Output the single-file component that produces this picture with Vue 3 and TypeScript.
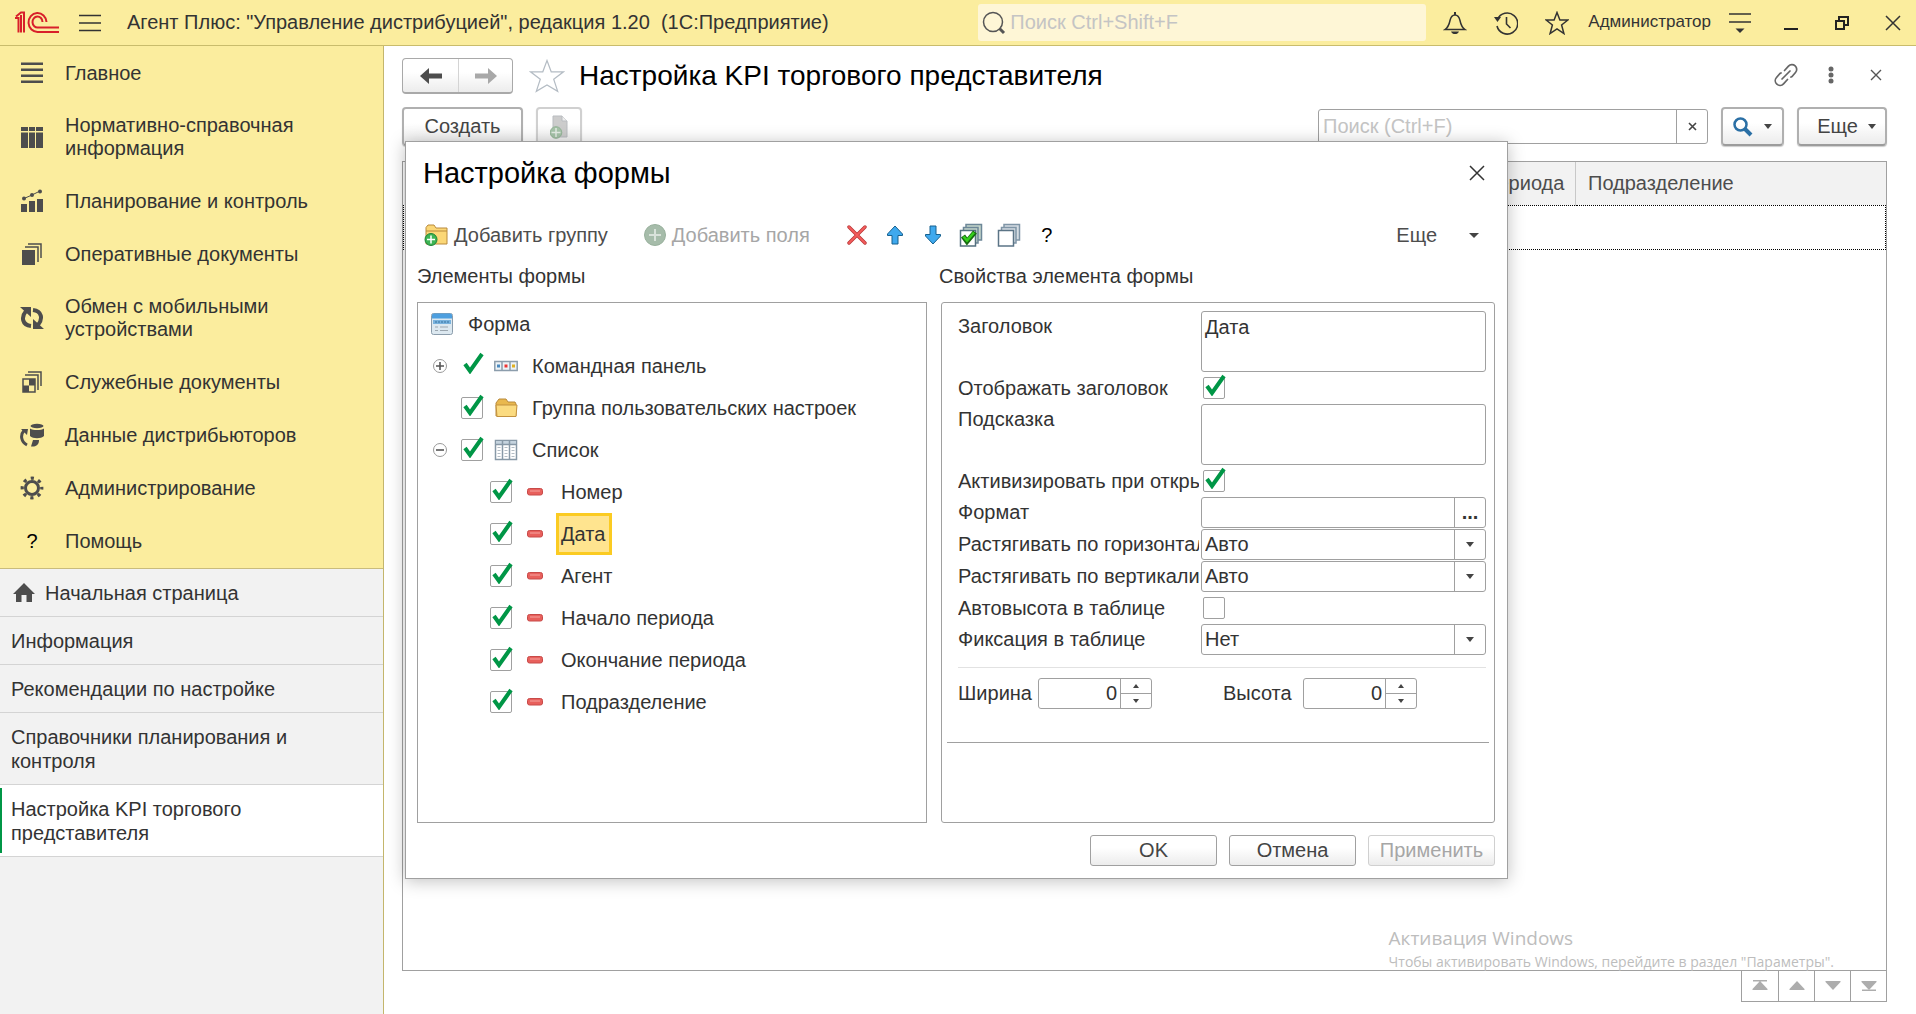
<script setup lang="ts">
import { ref } from 'vue'

interface Section { icon: string; title: string }
interface TreeField { title: string; visible: boolean }

const sections: Section[] = [
  { icon: 'main', title: 'Главное' },
  { icon: 'table', title: 'Нормативно-справочная информация' },
  { icon: 'chart', title: 'Планирование и контроль' },
  { icon: 'docs', title: 'Оперативные документы' },
  { icon: 'sync', title: 'Обмен с мобильными устройствами' },
  { icon: 'service', title: 'Служебные документы' },
  { icon: 'data', title: 'Данные дистрибьюторов' },
  { icon: 'gear', title: 'Администрирование' },
  { icon: 'help', title: 'Помощь' },
]

const openPages: string[] = [
  'Информация',
  'Рекомендации по настройке',
  'Справочники планирования и контроля',
  'Настройка KPI торгового представителя',
]
const currentPage = openPages[3]

const fields = ref<TreeField[]>(
  ['Номер', 'Дата', 'Агент', 'Начало периода', 'Окончание периода', 'Подразделение'].map((title) => ({ title, visible: true })),
)
const selected = ref('Дата')

const groupVisible = ref(true)
const listVisible = ref(true)

const caption = ref('Дата')
const showCaption = ref(true)
const hint = ref('')
const activate = ref(true)
const format = ref('')
const stretchX = ref('Авто')
const stretchY = ref('Авто')
const autoHeight = ref(false)
const fixation = ref('Нет')
const width = ref(0)
const height = ref(0)
</script>

<template>
  <div class="app">
    <header class="topbar">
      <svg class="logo" width="44" height="24" viewBox="0 0 44 24" fill="none" stroke="#d8202a" stroke-width="2">
        <path d="M0 7h3.500V21.500M1 5.500 6 1.500h3V21.500M6 4v17.500" />
        <path d="M31.500 11A9 9.500 0 1 0 23 21H44M27.500 11A5 5.500 0 1 0 23 16.500H44" />
      </svg>
      <button class="icon-btn menu-btn" aria-label="Меню">
        <svg width="22" height="18" viewBox="0 0 22 18" stroke="#333" stroke-width="1.500"><path d="M0 1.500h22M0 9h22M0 16.500h22" /></svg>
      </button>
      <div class="app-title">Агент Плюс: "Управление дистрибуцией", редакция 1.20&nbsp; (1С:Предприятие)</div>
      <label class="global-search">
        <svg width="24" height="24" viewBox="0 0 24 24" fill="none" stroke="#555"><circle cx="11" cy="11" r="9.500" stroke-width="1.500" /><path d="m17.500 17.500 4.500 4.500" stroke-width="3" /></svg>
        <input type="text" placeholder="Поиск Ctrl+Shift+F" aria-label="Поиск" />
      </label>
      <button class="icon-btn bell" aria-label="Уведомления">
        <svg width="24" height="24" viewBox="0 0 24 24" fill="none" stroke="#333" stroke-width="1.500"><path d="M2 18.500c3-2 4-4 5-9C8 5 9.500 4 12 4s4 1 5 5.500c1 5 2 7 5 9z" /><path d="M12 1v3" stroke-width="2" /><path d="M8 20.500h8c-1 2-2 2.500-4 2.500s-3-.5-4-2.500z" fill="#333" stroke="none" /></svg>
      </button>
      <button class="icon-btn history" aria-label="История">
        <svg width="24" height="24" viewBox="0 0 24 24" fill="none" stroke="#333" stroke-width="1.600"><path d="M3.500 8.500A10.500 10.500 0 1 1 3 15" /><path d="M12.500 6v7l4 4" /><path d="M0 6h7l-3.500 5z" fill="#333" stroke="none" /></svg>
      </button>
      <button class="icon-btn fav" aria-label="Избранное">
        <svg width="24" height="24" viewBox="0 0 24 24" fill="none" stroke="#333" stroke-width="1.500"><path d="m12 1.500 2.900 7.500h8l-6.300 5 2.300 8.500-6.900-4.700-6.900 4.700 2.300-8.500L1.100 9h8z" /></svg>
      </button>
      <a class="user" href="#">Администратор</a>
      <button class="icon-btn" aria-label="Сервис">
        <svg width="22" height="22" viewBox="0 0 22 22" stroke="#333" stroke-width="1.500"><path d="M0 2h22M0 10h22" /><path d="M6.500 16.500h9l-4.500 4.500z" fill="#333" stroke="none" /></svg>
      </button>
      <button class="icon-btn minimize" aria-label="Свернуть">
        <svg width="16" height="16" viewBox="0 0 16 16"><path d="M1 13h14v2H1z" fill="#222" /></svg>
      </button>
      <button class="icon-btn restore" aria-label="Восстановить">
        <svg width="16" height="16" viewBox="0 0 16 16" fill="none" stroke="#222" stroke-width="2"><path d="M2 6h8v8H2zM5 5V2h9v8h-3" /></svg>
      </button>
      <button class="icon-btn close-app" aria-label="Закрыть">
        <svg width="16" height="16" viewBox="0 0 16 16" stroke="#333" stroke-width="1.500"><path d="m1 1 14 14M15 1 1 15" /></svg>
      </button>
    </header>

    <div class="body">
      <aside class="sidebar">
        <nav class="sections">
          <a v-for="s in sections" :key="s.icon" href="#" class="section">
            <span v-if="s.icon === 'help'" class="section-icon help">?</span>
            <svg v-else class="section-icon" width="24" height="24" viewBox="0 0 24 24" fill="#4d4d4d">
              <path v-if="s.icon === 'main'" d="M1 1.500h22v2.500H1zM1 7.500h22V10H1zM1 13.500h22V16H1zM1 19.500h22V22H1z" />
              <path v-else-if="s.icon === 'table'" d="M1 2h7v4H1zM9 2h6v4H9zM16 2h7v4h-7zM1 7.500h7V23H1zM9 7.500h6V23H9zM16 7.500h7V23h-7z" />
              <g v-else-if="s.icon === 'chart'">
                <path d="M1 15h6v8H1zM9 12h6v11H9zM17 10h6v13h-6z" />
                <path d="M4 9.500 12 6l8-4" stroke="#4d4d4d" stroke-width="1" fill="none" />
                <circle cx="4" cy="9.500" r="2" /><circle cx="12" cy="6" r="2" /><circle cx="20" cy="2.500" r="2" />
              </g>
              <g v-else-if="s.icon === 'docs'">
                <path d="M2 8h13v15H2z" />
                <path d="M5 5h13v15M8 2h13v14" fill="none" stroke="#4d4d4d" stroke-width="1.500" />
              </g>
              <g v-else-if="s.icon === 'sync'" fill="none" stroke="#4d4d4d" stroke-width="4">
                <path d="M11 20C2 19 1 11 6 5" /><path d="M13 4c9 1 10 9 5 15" />
                <path d="M0 1h11v10zM24 23H13V13z" fill="#4d4d4d" stroke="none" />
              </g>
              <g v-else-if="s.icon === 'service'">
                <path d="M3 9h12v13H3z" fill="none" stroke="#4d4d4d" stroke-width="1.500" />
                <path d="M9 9h6v6.500H9zM3 15.500h6V22H3z" />
                <path d="M5 5h13v15M8 2h13v14" fill="none" stroke="#4d4d4d" stroke-width="1.500" />
              </g>
              <g v-else-if="s.icon === 'data'">
                <ellipse cx="17" cy="3" rx="6.500" ry="2.200" />
                <path d="M10 5.500c3 2 11 2 14 0V13c-3 3-11 3-14 0z" />
                <path d="M7 22C1 19 0 12 4 7.500" fill="none" stroke="#4d4d4d" stroke-width="3" />
                <path d="M1 6h7l-1 6zM13 17h6c0 4-2 6-5 6.500h-3z" />
              </g>
              <g v-else fill="none" stroke="#4d4d4d">
                <circle cx="12" cy="12" r="6.500" stroke-width="3" />
                <circle cx="12" cy="12" r="9.800" stroke-width="3.200" stroke-dasharray="3.200 4.497" stroke-dashoffset="1.600" />
              </g>
            </svg>
            <span class="section-title">{{ s.title }}</span>
          </a>
        </nav>
        <nav class="pages">
          <a href="#" class="page home">
            <svg width="22" height="20" viewBox="0 0 22 20" fill="#4d4d4d"><path d="M11 0 22 11h-3v8h-5.500v-7h-5v7H3v-8H0z" /></svg>
            <span>Начальная страница</span>
          </a>
          <a v-for="p in openPages" :key="p" href="#" class="page" :class="{ current: p === currentPage }"><span>{{ p }}</span></a>
        </nav>
      </aside>

      <main class="main">
        <div class="title-row">
          <div class="nav-buttons">
            <button aria-label="Назад"><svg width="22" height="16" viewBox="0 0 22 16" fill="#4d4d4d"><path d="M0 8 9 0v5.500h13v5H9V16z" /></svg></button>
            <button aria-label="Вперед"><svg width="22" height="16" viewBox="0 0 22 16" fill="#a8a8a8"><path d="M22 8 13 0v5.500H0v5h13V16z" /></svg></button>
          </div>
          <svg class="page-star" width="36" height="34" viewBox="0 0 36 34" fill="none" stroke="#b4bcc4" stroke-width="1.200"><path d="m18 1.500 4.200 11.300h12.300L24.700 20.300l4 12L18 26 7.300 32.300l4-12L1.500 12.800h12.300z" /></svg>
          <h1>Настройка KPI торгового представителя</h1>
          <div class="page-tools">
            <button class="icon-btn" aria-label="Ссылка">
              <svg width="24" height="24" viewBox="0 0 24 24" fill="none" stroke="#666" stroke-width="1.700" stroke-linecap="round"><path d="m8 16 8-8" /><path d="m10.500 7.500 4-4.300a4.600 4.600 0 0 1 7 6.300L18 13.500l-1 .5" /><path d="m13.500 16.500-4 4.300a4.600 4.600 0 0 1-7-6.300L6 10.500l1-.5" /></svg>
            </button>
            <button class="icon-btn" aria-label="Действия">
              <svg width="6" height="18" viewBox="0 0 6 18" fill="#666"><circle cx="3" cy="3" r="2.500" /><circle cx="3" cy="9" r="2.500" /><circle cx="3" cy="15" r="2.500" /></svg>
            </button>
            <button class="icon-btn" aria-label="Закрыть страницу">
              <svg width="12" height="12" viewBox="0 0 12 12" stroke="#555" stroke-width="1.400"><path d="m1 1 10 10M11 1 1 11" /></svg>
            </button>
          </div>
        </div>

        <div class="commands">
          <button class="cmd create">Создать</button>
          <button class="cmd copy" disabled aria-label="Скопировать">
            <svg width="18" height="24" viewBox="0 0 18 24"><path d="M3 1h9l5 5v16H3z" fill="#ccc" stroke="#b9bcc0" /><path d="M12 1v5h5" fill="#eee" stroke="#b9bcc0" /><circle cx="6" cy="17.500" r="5.800" fill="#a5c3a8" stroke="#93b396" /><path d="M6 13v9M1.500 17.500h9" stroke="#e4ece4" stroke-width="1.500" /></svg>
          </button>
          <div class="list-search">
            <input type="text" placeholder="Поиск (Ctrl+F)" aria-label="Поиск в списке" />
            <button aria-label="Очистить"><svg width="9" height="9" viewBox="0 0 9 9" stroke="#444" stroke-width="1.600"><path d="m1 1 7 7M8 1 1 8" /></svg></button>
          </div>
          <button class="cmd find" aria-label="Найти">
            <svg width="20" height="20" viewBox="0 0 20 20" fill="none" stroke="#2a6fa5"><circle cx="7.500" cy="7.500" r="6" stroke-width="2.500" /><path d="m12 12 6 6" stroke-width="4" /></svg>
            <i class="caret"></i>
          </button>
          <button class="cmd more">Еще <i class="caret"></i></button>
        </div>

        <div class="list">
          <table>
            <thead>
              <tr>
                <td></td>
                <th scope="col" class="col-end">Окончание периода</th>
                <th scope="col" class="col-unit">Подразделение</th>
              </tr>
            </thead>
            <tbody>
              <tr class="focused"><td colspan="3"></td></tr>
            </tbody>
          </table>
          <div class="watermark">
            <div class="wm-title">Активация Windows</div>
            <div class="wm-text">Чтобы активировать Windows, перейдите в раздел "Параметры".</div>
          </div>
        </div>
        <div class="pager">
          <button aria-label="В начало"><svg width="16" height="12" viewBox="0 0 16 12" fill="#adadad"><path d="M1 0h14v1.500H1zM8 1l7.500 8v1H.5V9z" /></svg></button>
          <button aria-label="Вверх"><svg width="16" height="12" viewBox="0 0 16 12" fill="#adadad"><path d="m8 1 7.500 8v1H.5V9z" /></svg></button>
          <button aria-label="Вниз"><svg width="16" height="12" viewBox="0 0 16 12" fill="#adadad"><path d="m8 10 7.500-8V1H.5v1z" /></svg></button>
          <button aria-label="В конец"><svg width="16" height="12" viewBox="0 0 16 12" fill="#adadad"><path d="m8 10 7.500-8V1H.5v1zM1 9.500h14V11H1z" /></svg></button>
        </div>

        <section class="dialog" role="dialog" aria-labelledby="dialog-title">
          <div class="dialog-head">
            <h2 id="dialog-title">Настройка формы</h2>
            <button class="icon-btn" aria-label="Закрыть окно">
              <svg width="16" height="16" viewBox="0 0 16 16" stroke="#333" stroke-width="1.500"><path d="m1 1 14 14M15 1 1 15" /></svg>
            </button>
          </div>

          <div class="dialog-tools">
            <button class="tool">
              <svg width="24" height="24" viewBox="0 0 24 24"><path d="M2 4.500 4 2h6l2 3h11v16H2z" fill="#fbd777" stroke="#b98a3c" /><path d="M2 8h21" stroke="#b98a3c" /><circle cx="7" cy="16.500" r="6" fill="#3db554" stroke="#1c8338" /><path d="M7 12.500v8M3 16.500h8" stroke="#fff" stroke-width="1.500" /></svg>
              Добавить группу
            </button>
            <button class="tool add-fields" disabled>
              <svg width="22" height="22" viewBox="0 0 22 22"><circle cx="11" cy="11" r="10.500" fill="#a6bcaa" stroke="#98b09c" /><path d="M11 5v12M5 11h12" stroke="#d9e2da" stroke-width="2" /></svg>
              Добавить поля
            </button>
            <div class="icon-tools">
              <button aria-label="Удалить">
                <svg width="20" height="20" viewBox="0 0 20 20" stroke-linecap="round"><path d="m2 2 16 16M18 2 2 18" stroke="#b73535" stroke-width="3.400" /><path d="m2 2 16 16M18 2 2 18" stroke="#f45d5d" stroke-width="1.800" /></svg>
              </button>
              <button aria-label="Переместить вверх">
                <svg width="18" height="20" viewBox="0 0 18 20"><path d="m9 1 7.500 8v1.500H12V19H6v-8.500H1.500V9z" fill="#3fa9ee" stroke="#17618f" /></svg>
              </button>
              <button aria-label="Переместить вниз">
                <svg width="18" height="20" viewBox="0 0 18 20"><path d="m9 19 7.500-8V9.500H12V1H6v8.500H1.500V11z" fill="#3fa9ee" stroke="#17618f" /></svg>
              </button>
              <button aria-label="Установить флажки">
                <svg width="24" height="24" viewBox="0 0 24 24" fill="#fff" stroke="#6d8798" stroke-width="1.500"><path d="M7 1.500h15.500V17H7z" fill="#c5d6cb" /><path d="M4.500 4.500H19V20H4.500z" fill="#c5d6cb" /><path d="M1.500 7.500h15V23h-15z" stroke="#54707f" /><path d="m4 13 4 5.500L16 9" fill="none" stroke="#176b10" stroke-width="5" /><path d="m4.500 13.500 3.500 4 7-8" fill="none" stroke="#35cf1c" stroke-width="2.600" /></svg>
              </button>
              <button aria-label="Снять флажки">
                <svg width="24" height="24" viewBox="0 0 24 24" fill="#fff" stroke="#7f95a6" stroke-width="1.500"><path d="M7 1.500h15.500V17H7z" fill="#d5dde3" /><path d="M4.500 4.500H19V20H4.500z" fill="#d5dde3" /><path d="M1.500 7.500h15V23h-15z" stroke="#5b7486" /></svg>
              </button>
              <button class="question" aria-label="Справка">?</button>
            </div>
            <button class="tool tool-more">Еще <i class="caret"></i></button>
          </div>

          <div class="columns">
            <div class="column">
              <div class="column-title">Элементы формы</div>
              <ul class="tree">
                <li class="node root">
                  <svg width="22" height="22" viewBox="0 0 22 22"><rect x=".5" y=".5" width="21" height="21" rx="2" fill="#dce8f0" stroke="#8b9cab" /><path d="M1 2q0-1.500 2-1.500h16q2 0 2 1.500v3.500H1z" fill="#4d9fdf" /><path d="M2 7h18v4H2z" fill="#78b2dd" /><path d="M4 9h14" stroke="#35719f" stroke-dasharray="2 1" /><path d="M4 14h3M4 17.500h3M9 14h8M9 17.500h8" stroke="#9ba6af" /></svg>
                  <span class="name">Форма</span>
                </li>
                <li class="node">
                  <button class="expander" aria-label="Развернуть"><svg width="14" height="14" viewBox="0 0 14 14" fill="none" stroke="#999"><circle cx="7" cy="7" r="6.500" /><path d="M3 7h8M7 3v8" stroke="#555" stroke-width="1.600" /></svg></button>
                  <span class="check plain"><input id="f-panel" type="checkbox" checked disabled /><svg width="22" height="22" viewBox="0 0 22 22"><path d="m3 12 5 7L20 2" /></svg></span>
                  <svg class="kind" width="24" height="24" viewBox="0 0 24 24"><path d="M.8 7.500h22.400v9H.8zM8 7.500v9M16 7.500v9" fill="#eef3f6" stroke="#8c9dac" stroke-width="1.500" /><path d="M3 10.500h3v3H3z" fill="#4a8ac0" /><path d="M10.500 10.500h3v3h-3z" fill="#e33" /><path d="M18 10.500h3v3h-3z" fill="#e0b020" /></svg>
                  <label class="name" for="f-panel">Командная панель</label>
                </li>
                <li class="node">
                  <span class="expander"></span>
                  <span class="check"><input id="f-group" v-model="groupVisible" type="checkbox" /><svg v-if="groupVisible" width="22" height="22" viewBox="0 0 22 22"><path d="m3 12 5 7L20 2" /></svg></span>
                  <svg class="kind" width="24" height="24" viewBox="0 0 24 24"><path d="M2 7 5 3h7l2 3h7l1 2v12H2z" fill="#e9b84e" stroke="#b98a3c" /><path d="M2 9h21l-1 11.500H3z" fill="#fbdb80" stroke="#c3923f" /></svg>
                  <label class="name" for="f-group">Группа пользовательских настроек</label>
                </li>
                <li class="node">
                  <button class="expander" aria-label="Свернуть ветвь"><svg width="14" height="14" viewBox="0 0 14 14" fill="none" stroke="#999"><circle cx="7" cy="7" r="6.500" /><path d="M3 7h8" stroke="#555" stroke-width="1.600" /></svg></button>
                  <span class="check"><input id="f-list" v-model="listVisible" type="checkbox" /><svg v-if="listVisible" width="22" height="22" viewBox="0 0 22 22"><path d="m3 12 5 7L20 2" /></svg></span>
                  <svg class="kind" width="24" height="24" viewBox="0 0 24 24"><path d="M1.500 2.500h21v19h-21z" fill="#fff" stroke="#8798a6" stroke-width="1.500" /><path d="M2 3h20v3H2z" fill="#c5d3de" /><path d="M1.500 6.500h21M8.500 3v18M15.500 3v18" stroke="#8798a6" stroke-width="1.500" /><path d="M5 9v11M12 9v11M19 9v11" stroke="#b3bcc4" stroke-width="3" stroke-dasharray="1 2" /></svg>
                  <label class="name" for="f-list">Список</label>
                </li>
                <li v-for="(f, i) in fields" :key="f.title" class="node leaf" @click="selected = f.title">
                  <span class="check"><input :id="'f-' + i" v-model="f.visible" type="checkbox" /><svg v-if="f.visible" width="22" height="22" viewBox="0 0 22 22"><path d="m3 12 5 7L20 2" /></svg></span>
                  <svg class="kind" width="16" height="8" viewBox="0 0 16 8"><rect x=".5" y=".5" width="15" height="6.500" rx="2" fill="#e8605c" stroke="#c84a48" /><path d="M3 3h10" stroke="#f6a5a0" /></svg>
                  <label class="name" :class="{ selected: selected === f.title }" :for="'f-' + i">{{ f.title }}</label>
                </li>
              </ul>
            </div>

            <div class="column">
              <div class="column-title">Свойства элемента формы</div>
              <div class="props">
                <div class="prop-grid">
                  <label for="p-caption">Заголовок</label>
                  <textarea id="p-caption" v-model="caption"></textarea>
                  <label for="p-show">Отображать заголовок</label>
                  <span class="check"><input id="p-show" v-model="showCaption" type="checkbox" /><svg v-if="showCaption" width="22" height="22" viewBox="0 0 22 22"><path d="m3 12 5 7L20 2" /></svg></span>
                  <label for="p-hint">Подсказка</label>
                  <textarea id="p-hint" v-model="hint"></textarea>
                  <label for="p-activate">Активизировать при открытии</label>
                  <span class="check"><input id="p-activate" v-model="activate" type="checkbox" /><svg v-if="activate" width="22" height="22" viewBox="0 0 22 22"><path d="m3 12 5 7L20 2" /></svg></span>
                  <label for="p-format">Формат</label>
                  <div class="field"><input id="p-format" v-model="format" type="text" /><button class="side dots" aria-label="Выбрать формат">...</button></div>
                  <label for="p-sx">Растягивать по горизонтали</label>
                  <div class="field"><select id="p-sx" v-model="stretchX"><option>Авто</option></select><span class="side"><i class="caret"></i></span></div>
                  <label for="p-sy">Растягивать по вертикали</label>
                  <div class="field"><select id="p-sy" v-model="stretchY"><option>Авто</option></select><span class="side"><i class="caret"></i></span></div>
                  <label for="p-auto">Автовысота в таблице</label>
                  <span class="check"><input id="p-auto" v-model="autoHeight" type="checkbox" /><svg v-if="autoHeight" width="22" height="22" viewBox="0 0 22 22"><path d="m3 12 5 7L20 2" /></svg></span>
                  <label for="p-fix">Фиксация в таблице</label>
                  <div class="field"><select id="p-fix" v-model="fixation"><option>Нет</option></select><span class="side"><i class="caret"></i></span></div>
                </div>
                <div class="sizes">
                  <div class="size">
                    <label for="p-w">Ширина</label>
                    <div class="field number">
                      <input id="p-w" v-model="width" type="text" />
                      <span class="side spin"><button aria-label="Увеличить ширину" @click="width++"><i class="caret up"></i></button><button aria-label="Уменьшить ширину" @click="width--"><i class="caret down"></i></button></span>
                    </div>
                  </div>
                  <div class="size">
                    <label for="p-h">Высота</label>
                    <div class="field number">
                      <input id="p-h" v-model="height" type="text" />
                      <span class="side spin"><button aria-label="Увеличить высоту" @click="height++"><i class="caret up"></i></button><button aria-label="Уменьшить высоту" @click="height--"><i class="caret down"></i></button></span>
                    </div>
                  </div>
                </div>
                <hr />
              </div>
            </div>
          </div>

          <div class="dialog-actions">
            <button>OK</button>
            <button>Отмена</button>
            <button disabled>Применить</button>
          </div>
        </section>
      </main>
    </div>
  </div>
</template>

<style>
body {
  margin: 0;
  background: #fff;
}
</style>

<style scoped>
.app {
  display: flex;
  flex-direction: column;
  min-height: 100vh;
  font-family: "Liberation Sans", Arial, sans-serif;
  font-size: 20px;
  line-height: 23px;
  color: #333;
}
.app *,
.app {
  box-sizing: border-box;
}
button,
input,
select,
textarea {
  font: inherit;
  color: inherit;
  margin: 0;
  padding: 0;
  border: 0;
  background: none;
  border-radius: 0;
  outline: none;
}
a {
  color: inherit;
  text-decoration: none;
}
svg {
  display: block;
  flex: none;
}
input::placeholder {
  color: #c4c4c4;
  opacity: 1;
}
.icon-btn {
  display: flex;
  align-items: center;
  justify-content: center;
}
.caret {
  display: inline-block;
  border: 4px solid transparent;
  border-top: 5px solid #444;
  border-bottom: 0;
}

/* Top bar */
.topbar {
  display: flex;
  align-items: center;
  height: 46px;
  padding: 0 15px;
  background: #fbed9e;
  border-bottom: 1px solid #c9bc6c;
}
.menu-btn {
  margin-left: 20px;
}
.app-title {
  flex: 1;
  margin-left: 26px;
  white-space: nowrap;
}
.global-search {
  display: flex;
  align-items: center;
  gap: 4px;
  width: 448px;
  height: 37px;
  padding-left: 4px;
  background: #fef6d6;
  border-radius: 3px;
}
.global-search input {
  flex: 1;
  min-width: 0;
}
.bell {
  margin-left: 17px;
}
.history,
.fav {
  margin-left: 27px;
}
.user {
  margin: 0 18px 2px 19px;
  font-size: 17px;
}
.minimize {
  margin-left: 32px;
}
.restore,
.close-app {
  margin-left: 35px;
}

.body {
  display: flex;
  flex: 1;
}

/* Sidebar */
.sidebar {
  flex: none;
  width: 384px;
  background: #f2f2f2;
  border-right: 1px solid #c4b66c;
}
.sections {
  padding-top: 1px;
  background: #fbed9e;
  border-bottom: 1px solid #c9bc7c;
}
.section {
  display: flex;
  align-items: center;
  min-height: 53px;
  padding: 14px 60px 15px 20px;
}
.section-icon {
  width: 24px;
  margin-right: 21px;
}
.help {
  flex: none;
  text-align: center;
  color: #000;
}
.page {
  display: flex;
  align-items: center;
  padding: 12px 60px 11px 11px;
  line-height: 24px;
  border-bottom: 1px solid #d4d4d4;
}
.home {
  gap: 10px;
  padding-left: 13px;
}
.current {
  position: relative;
  background: #fff;
}
.current::before {
  content: "";
  position: absolute;
  left: 0;
  top: 3px;
  bottom: 3px;
  width: 2px;
  background: #009646;
}

/* Page */
.main {
  position: relative;
  display: flex;
  flex: 1;
  flex-direction: column;
  min-width: 0;
  padding: 12px 29px 12px 18px;
}
.title-row {
  display: flex;
  align-items: center;
  height: 36px;
}
.nav-buttons {
  display: flex;
  height: 36px;
  border: 1px solid #a9a9a9;
  border-bottom-width: 2px;
  border-radius: 4px;
  background: linear-gradient(#fff 40%, #ececec);
}
.nav-buttons button {
  display: flex;
  align-items: center;
  justify-content: center;
  width: 55px;
}
.nav-buttons button + button {
  width: 54px;
  border-left: 1px solid #d4d4d4;
}
.page-star {
  margin: 0 14px 0 16px;
}
h1,
h2 {
  margin: 0;
  font-weight: 400;
  color: #000;
}
h1 {
  font-size: 28px;
  line-height: 36px;
}
.page-tools {
  display: flex;
  align-items: center;
  gap: 30px;
  margin: 0 5px 2px auto;
}
.page-tools button + button + button {
  margin-left: 6px;
}
.commands {
  display: flex;
  align-items: center;
  margin-top: 13px;
  color: #444;
}
.cmd {
  display: flex;
  align-items: center;
  justify-content: center;
  height: 39px;
  border: 2px solid #b0b0b0;
  border-bottom-color: #9c9c9c;
  border-radius: 4px;
  background: linear-gradient(#fff 40%, #ececec);
  box-shadow: 0 1px 1px #ccc;
}
.create {
  width: 121px;
}
.copy {
  width: 46px;
  margin-left: 13px;
  border-color: #d0d0d0;
}
.list-search {
  display: flex;
  width: 390px;
  height: 35px;
  margin-left: auto;
  border: 1px solid #a0a0a0;
  border-radius: 3px;
}
.list-search input {
  flex: 1;
  min-width: 0;
  padding-left: 4px;
}
.list-search button {
  display: flex;
  align-items: center;
  justify-content: center;
  width: 31px;
  border-left: 1px solid #a0a0a0;
}
.find {
  gap: 11px;
  width: 63px;
  margin-left: 13px;
}
.more {
  gap: 10px;
  width: 90px;
  margin-left: 13px;
  padding-left: 9px;
}

/* List */
.list {
  position: relative;
  flex: 1;
  margin-top: 15px;
  border: 1px solid #a0a0a0;
}
table {
  width: 100%;
  border-collapse: collapse;
  table-layout: fixed;
}
thead td,
th {
  height: 43px;
  padding: 0 12px;
  font-weight: 400;
  text-align: left;
  color: #4d4d4d;
  background: #f2f2f2;
  white-space: nowrap;
}
.col-end {
  width: 208px;
  border-right: 1px solid #c8c8c8;
}
.col-unit {
  width: 310px;
}
.focused td {
  height: 44px;
  padding: 0;
  border: 1px dotted #000;
}
.watermark {
  position: absolute;
  right: 52px;
  bottom: 0;
  font-family: "Open Sans", "Noto Sans", sans-serif;
  color: #bdbdbd;
  white-space: nowrap;
}
.wm-title {
  font-size: 19px;
  line-height: 30px;
}
.wm-text {
  font-size: 14px;
  line-height: 17px;
}
.pager {
  display: flex;
  align-self: flex-end;
  border: 1px solid #a0a0a0;
  border-top: 0;
}
.pager button {
  display: flex;
  align-items: center;
  justify-content: center;
  width: 36px;
  height: 30px;
}
.pager button + button {
  border-left: 1px solid #a0a0a0;
}

/* Dialog */
.dialog {
  position: absolute;
  top: 95px;
  left: 21px;
  width: 72%;
  min-width: 1000px;
  padding: 0 12px 12px 11px;
  border: 1px solid #a0a0a0;
  background: #fff;
  box-shadow: 0 2px 16px rgba(0, 0, 0, 0.25);
}
.dialog-head {
  display: flex;
  align-items: center;
  justify-content: space-between;
  height: 62px;
  padding: 0 10px 0 6px;
}
h2 {
  font-size: 29px;
  line-height: 36px;
}
.dialog-tools {
  display: flex;
  align-items: center;
  height: 62px;
  padding: 0 16px 0 7px;
  color: #4d4d4d;
}
.tool {
  display: flex;
  align-items: center;
  gap: 6px;
}
.add-fields {
  margin: 0 28px 0 36px;
}
.tool:disabled {
  color: #a6a6a6;
}
.icon-tools {
  display: flex;
}
.icon-tools button {
  display: flex;
  align-items: center;
  justify-content: center;
  width: 38px;
  height: 30px;
}
.icon-tools .question {
  color: #000;
}
.tool-more {
  gap: 32px;
  margin-left: auto;
}
.tool-more .caret {
  border-width: 5px 5px 0 5px;
}
.columns {
  display: grid;
  grid-template-columns: minmax(0, 510fr) minmax(0, 556fr);
  gap: 12px;
}
.column {
  display: flex;
  flex-direction: column;
  min-width: 0;
}
.column-title {
  margin-bottom: 16px;
  line-height: 20px;
}
.tree {
  flex: 1;
  min-height: 521px;
  margin: 0;
  padding: 0 13px;
  border: 1px solid #a0a0a0;
  list-style: none;
}
.node {
  display: flex;
  align-items: center;
  height: 42px;
}
.root .name {
  margin-left: 10px;
}
.expander {
  display: flex;
  justify-content: center;
  width: 18px;
  margin-right: 12px;
}
.kind {
  margin: 0 9px 0 11px;
}
.name {
  padding: 0 5px;
}
.leaf {
  padding-left: 59px;
}
.leaf .kind {
  margin: 0 13px 0 15px;
}
.selected {
  align-self: stretch;
  padding: 0 4px 0 2px;
  line-height: 36px;
  border: 3px solid #fbcb22;
  background: #ffe48f;
}
.check {
  position: relative;
  display: inline-flex;
  align-items: center;
}
.check input {
  appearance: none;
  width: 22px;
  height: 22px;
  border: 1px solid #a0a0a0;
  border-radius: 2px;
  background: #fff;
}
.plain input {
  border-color: transparent;
}
.check svg {
  position: absolute;
  left: 1px;
  bottom: 50%;
  margin-bottom: -8px;
  fill: none;
  stroke: #009646;
  stroke-width: 4;
  pointer-events: none;
}

/* Element properties */
.props {
  flex: 1;
  margin-left: 2px;
  border: 1px solid #a0a0a0;
  border-radius: 3px;
}
.prop-grid {
  display: grid;
  grid-template-columns: 241px minmax(0, 1fr);
  gap: 1px 2px;
  margin: 8px 8px 0 16px;
  padding-bottom: 12px;
  border-bottom: 1px solid #e2e2e2;
}
.prop-grid > label {
  overflow: hidden;
  line-height: 30px;
  white-space: nowrap;
}
.prop-grid .check {
  margin-left: 2px;
}
textarea {
  display: block;
  width: 100%;
  height: 61px;
  padding: 4px 3px;
  border: 1px solid #a0a0a0;
  border-radius: 3px;
  resize: none;
}
.field {
  display: flex;
  height: 31px;
  border: 1px solid #a0a0a0;
  border-radius: 3px;
}
.field input,
.field select {
  flex: 1;
  min-width: 0;
  padding: 0 3px;
  appearance: none;
}
.side {
  display: flex;
  align-items: center;
  justify-content: center;
  width: 31px;
  border-left: 1px solid #a0a0a0;
}
.dots {
  font-weight: 700;
}
.sizes {
  display: flex;
  gap: 71px;
  margin: 10px 16px 0 16px;
}
.size {
  display: flex;
  line-height: 31px;
}
.size label {
  width: 80px;
}
.number {
  width: 114px;
}
.number input {
  text-align: right;
}
.spin {
  flex-direction: column;
}
.spin button {
  display: flex;
  flex: 1;
  align-items: center;
  justify-content: center;
  width: 100%;
}
.spin button + button {
  border-top: 1px solid #a0a0a0;
}
.spin .caret {
  border-width: 4px 3px 0 3px;
}
.spin .up {
  transform: rotate(180deg);
}
hr {
  margin: 33px 5px 0 5px;
  border: 0;
  border-top: 1px solid #a0a0a0;
}
.dialog-actions {
  display: flex;
  justify-content: flex-end;
  gap: 12px;
  margin-top: 12px;
  color: #444;
}
.dialog-actions button {
  width: 127px;
  height: 31px;
  border: 1px solid #a0a0a0;
  border-radius: 3px;
  background: linear-gradient(#fff 40%, #ececec);
}
.dialog-actions button:disabled {
  color: #a6a6a6;
  border-color: #d0d0d0;
}
</style>
